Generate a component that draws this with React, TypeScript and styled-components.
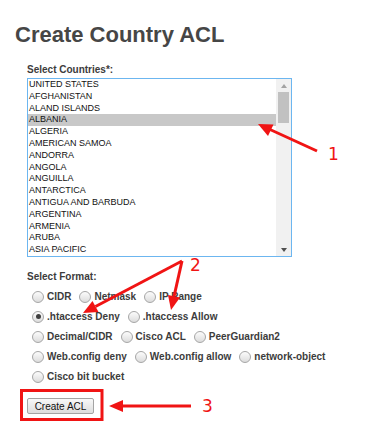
import styled, { createGlobalStyle } from 'styled-components';

const GlobalStyle = createGlobalStyle`
  html, body {
    margin: 0;
    padding: 0;
    background: #fff;
  }
  body {
    font-family: "Liberation Sans", Arial, sans-serif;
  }
`;

const countries = [
  'UNITED STATES',
  'AFGHANISTAN',
  'ALAND ISLANDS',
  'ALBANIA',
  'ALGERIA',
  'AMERICAN SAMOA',
  'ANDORRA',
  'ANGOLA',
  'ANGUILLA',
  'ANTARCTICA',
  'ANTIGUA AND BARBUDA',
  'ARGENTINA',
  'ARMENIA',
  'ARUBA',
  'ASIA PACIFIC',
];

const formatRows = [
  ['CIDR', 'Netmask', 'IP Range'],
  ['.htaccess Deny', '.htaccess Allow'],
  ['Decimal/CIDR', 'Cisco ACL', 'PeerGuardian2'],
  ['Web.config deny', 'Web.config allow', 'network-object'],
  ['Cisco bit bucket'],
];

export default function App() {
  return (
    <>
      <GlobalStyle />
      <Page>
        <Title>Create Country ACL</Title>
        <Form onSubmit={(e) => e.preventDefault()}>
          <Label>Select Countries*:</Label>
          <ListBox>
            <Options>
              {countries.map((c) => (
                <Option key={c} $selected={c === 'ALBANIA'}>
                  {c}
                </Option>
              ))}
            </Options>
            <ScrollBar>
              <ArrowBtn>
                <Triangle $up />
              </ArrowBtn>
              <Thumb />
              <Track />
              <ArrowBtn>
                <Triangle />
              </ArrowBtn>
            </ScrollBar>
          </ListBox>

          <FormatLabel>Select Format:</FormatLabel>
          <RadioGroup>
            {formatRows.map((row, i) => (
              <RadioRow key={i}>
                {row.map((name) => (
                  <RadioItem key={name}>
                    <Radio
                      type="radio"
                      name="format"
                      defaultChecked={name === '.htaccess Deny'}
                    />
                    {name}
                  </RadioItem>
                ))}
              </RadioRow>
            ))}
          </RadioGroup>

          <SubmitButton type="submit">Create ACL</SubmitButton>
        </Form>

        <Overlay width="368" height="432" viewBox="0 0 368 432">
          {/* 1 */}
          <line x1="317" y1="151" x2="270" y2="129.5" />
          <polygon points="258,124 273.5,124.5 268,136" />
          {/* 2 */}
          <line x1="182" y1="261" x2="95.5" y2="306.5" />
          <polygon points="83,313 98.5,312 92.5,301" />
          <line x1="182" y1="261" x2="174" y2="296.5" />
          <polygon points="171,310 180,297.5 168,295" />
          {/* 3 */}
          <line x1="191" y1="406" x2="122" y2="406" />
          <polygon points="109,406 123,400 123,412" />
          <rect x="21.5" y="390.5" width="80.5" height="29" />
        </Overlay>
        <Marker style={{ left: 328, top: 146 }}>1</Marker>
        <Marker style={{ left: 190, top: 257 }}>2</Marker>
        <Marker style={{ left: 202, top: 398 }}>3</Marker>
      </Page>
    </>
  );
}

const Page = styled.div`
  position: relative;
  width: 368px;
  height: 432px;
  overflow: hidden;
  box-sizing: border-box;
  padding: 22px 0 0 15px;
`;

const Title = styled.h1`
  margin: 0;
  font-size: 22px;
  line-height: 25px;
  font-weight: bold;
  color: #464646;
`;

const Form = styled.form`
  margin: 17px 0 0 12px;
`;

const Label = styled.div`
  font-size: 10px;
  line-height: 12px;
  font-weight: bold;
  color: #3c3c3c;
`;

const FormatLabel = styled(Label)`
  margin-top: 13.5px;
`;

const ListBox = styled.div`
  margin-top: 2px;
  width: 265px;
  height: 179px;
  box-sizing: border-box;
  border: 1px solid #6cb6f0;
  display: flex;
  overflow: hidden;
`;

const Options = styled.div`
  flex: 1;
  display: flex;
  flex-direction: column;
`;

const Option = styled.div<{ $selected?: boolean }>`
  height: 11.8px;
  line-height: 11.8px;
  padding-left: 1px;
  font-size: 9px;
  color: #111;
  white-space: nowrap;
  background: ${(p) => (p.$selected ? '#c8c8c8' : 'transparent')};
`;

const ScrollBar = styled.div`
  width: 15px;
  background: #f1f1f1;
  display: flex;
  flex-direction: column;
`;

const ArrowBtn = styled.div`
  height: 13px;
  display: flex;
  align-items: center;
  justify-content: center;
`;

const Triangle = styled.div<{ $up?: boolean }>`
  width: 0;
  height: 0;
  border-left: 3.5px solid transparent;
  border-right: 3.5px solid transparent;
  ${(p) =>
    p.$up
      ? 'border-bottom: 4px solid #a3a3a3;'
      : 'border-top: 4px solid #505050;'}
`;

const Thumb = styled.div`
  height: 31px;
  margin: 0 2px 0 2px;
  background: #c1c1c1;
`;

const Track = styled.div`
  flex: 1;
`;

const RadioGroup = styled.div`
  margin-top: 4px;
  display: flex;
  flex-direction: column;
`;

const RadioRow = styled.div`
  height: 20px;
  display: flex;
  align-items: center;
  gap: 3px;
`;

const RadioItem = styled.label`
  display: inline-flex;
  align-items: center;
  font-size: 10px;
  font-weight: bold;
  color: #3c3c3c;
  white-space: nowrap;
`;

const Radio = styled.input`
  appearance: none;
  margin: 0 3px 0 5px;
  width: 12px;
  height: 12px;
  border-radius: 50%;
  border: 1px solid #a6a6a6;
  box-sizing: border-box;
  background: linear-gradient(#fcfcfc, #dcdcdc);
  display: grid;
  place-items: center;

  &:checked::after {
    content: '';
    width: 5px;
    height: 5px;
    border-radius: 50%;
    background: #3f3f3f;
  }
`;

const SubmitButton = styled.button`
  margin-top: 11.5px;
  width: 67px;
  height: 16px;
  padding: 0;
  font-family: "Liberation Sans", Arial, sans-serif;
  font-size: 10px;
  color: #111;
  background: linear-gradient(#f8f8f8, #dddddd);
  border: 1px solid #a4a4a4;
  border-radius: 2px;
`;

const Overlay = styled.svg`
  position: absolute;
  left: 0;
  top: 0;
  pointer-events: none;

  line {
    stroke: #f01414;
    stroke-width: 3;
  }
  polygon {
    fill: #f01414;
  }
  rect {
    fill: none;
    stroke: #f01414;
    stroke-width: 3;
  }
`;

const Marker = styled.span`
  position: absolute;
  font-family: "DejaVu Sans", sans-serif;
  font-size: 17px;
  line-height: 17px;
  color: #f01414;
`;
